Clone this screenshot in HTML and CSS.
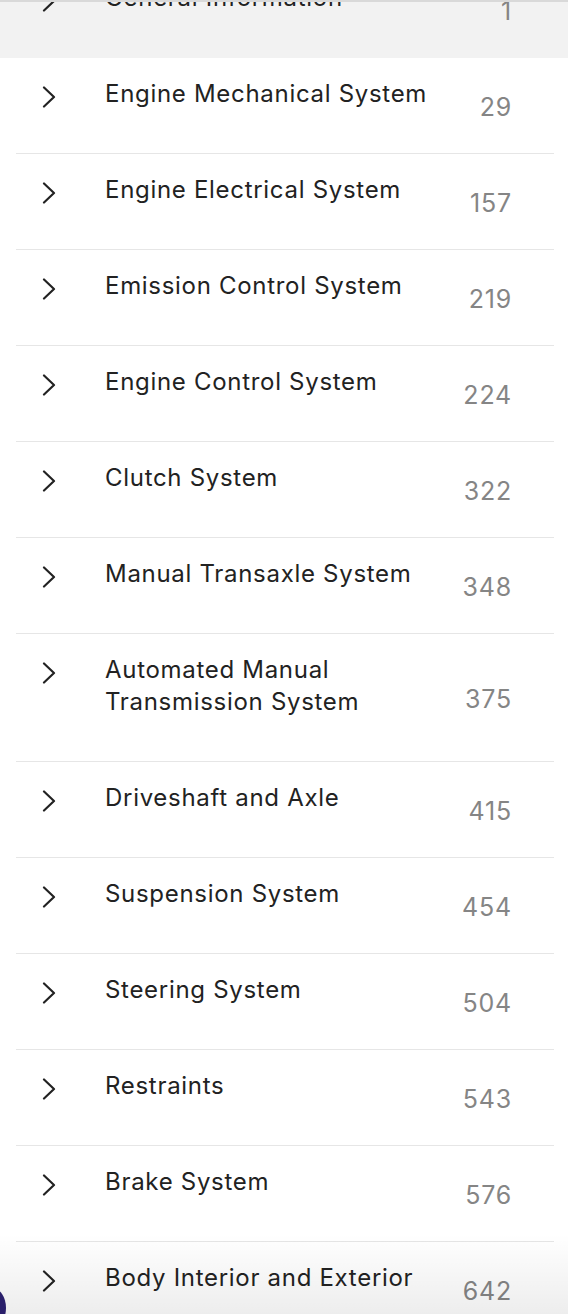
FILE: index.html
```html
<!DOCTYPE html>
<html lang="en">
<head>
<meta charset="utf-8">
<title>Contents</title>
<link rel="stylesheet" href="styles.css">
</head>
<body>
<div class="viewport">
  <ul class="toc">
    <li class="row row--active"><div class="row-inner">
      <svg class="chev" viewBox="0 0 14 22"><path d="M2 1.5 L12 11 L2 20.5"/></svg>
      <span class="title">General Information</span><span class="page">1</span></div></li>
    <li class="row"><div class="row-inner">
      <svg class="chev" viewBox="0 0 14 22"><path d="M2 1.5 L12 11 L2 20.5"/></svg>
      <span class="title">Engine Mechanical System</span><span class="page">29</span></div></li>
    <li class="row"><div class="row-inner">
      <svg class="chev" viewBox="0 0 14 22"><path d="M2 1.5 L12 11 L2 20.5"/></svg>
      <span class="title">Engine Electrical System</span><span class="page">157</span></div></li>
    <li class="row"><div class="row-inner">
      <svg class="chev" viewBox="0 0 14 22"><path d="M2 1.5 L12 11 L2 20.5"/></svg>
      <span class="title">Emission Control System</span><span class="page">219</span></div></li>
    <li class="row"><div class="row-inner">
      <svg class="chev" viewBox="0 0 14 22"><path d="M2 1.5 L12 11 L2 20.5"/></svg>
      <span class="title">Engine Control System</span><span class="page">224</span></div></li>
    <li class="row"><div class="row-inner">
      <svg class="chev" viewBox="0 0 14 22"><path d="M2 1.5 L12 11 L2 20.5"/></svg>
      <span class="title">Clutch System</span><span class="page">322</span></div></li>
    <li class="row"><div class="row-inner">
      <svg class="chev" viewBox="0 0 14 22"><path d="M2 1.5 L12 11 L2 20.5"/></svg>
      <span class="title">Manual Transaxle System</span><span class="page">348</span></div></li>
    <li class="row"><div class="row-inner">
      <svg class="chev" viewBox="0 0 14 22"><path d="M2 1.5 L12 11 L2 20.5"/></svg>
      <span class="title">Automated Manual<br>Transmission System</span><span class="page">375</span></div></li>
    <li class="row"><div class="row-inner">
      <svg class="chev" viewBox="0 0 14 22"><path d="M2 1.5 L12 11 L2 20.5"/></svg>
      <span class="title">Driveshaft and Axle</span><span class="page">415</span></div></li>
    <li class="row"><div class="row-inner">
      <svg class="chev" viewBox="0 0 14 22"><path d="M2 1.5 L12 11 L2 20.5"/></svg>
      <span class="title">Suspension System</span><span class="page">454</span></div></li>
    <li class="row"><div class="row-inner">
      <svg class="chev" viewBox="0 0 14 22"><path d="M2 1.5 L12 11 L2 20.5"/></svg>
      <span class="title">Steering System</span><span class="page">504</span></div></li>
    <li class="row"><div class="row-inner">
      <svg class="chev" viewBox="0 0 14 22"><path d="M2 1.5 L12 11 L2 20.5"/></svg>
      <span class="title">Restraints</span><span class="page">543</span></div></li>
    <li class="row"><div class="row-inner">
      <svg class="chev" viewBox="0 0 14 22"><path d="M2 1.5 L12 11 L2 20.5"/></svg>
      <span class="title">Brake System</span><span class="page">576</span></div></li>
    <li class="row"><div class="row-inner">
      <svg class="chev" viewBox="0 0 14 22"><path d="M2 1.5 L12 11 L2 20.5"/></svg>
      <span class="title">Body Interior and Exterior</span><span class="page">642</span></div></li>
  </ul>
  <div class="shade"></div>
  <div class="blob"></div>
</div>
</body>
</html>
```
FILE: styles.css
```css
* { box-sizing: border-box; }
html, body { margin: 0; padding: 0; background: #fff; }
body {
  font-family: Inter, "Open Sans", "Liberation Sans", sans-serif;
  -webkit-font-smoothing: antialiased;
}
.viewport {
  position: relative;
  width: 568px;
  height: 1314px;
  overflow: hidden;
  border-top: 2px solid #d9d9d9;
}
.toc {
  list-style: none;
  margin: -40px 0 0;
  padding: 0;
}
.row { background: #fff; }
.row--active { background: #f2f2f2; }
.row-inner {
  display: flex;
  margin: 0 14px 0 16px;
  border-bottom: 1px solid #e6e6e6;
}
.row--active .row-inner { border-bottom-color: #f2f2f2; }
.chev {
  flex: none;
  width: 14px;
  height: 22px;
  margin: 28px 0 0 26px;
  align-self: flex-start;
  fill: none;
  stroke: #222;
  stroke-width: 2.2;
  stroke-linecap: round;
  stroke-linejoin: round;
}
.title {
  flex: 1;
  padding: 20px 0 43px;
  margin-left: 49px;
  font-size: 24px;
  line-height: 32px;
  color: #222;
  letter-spacing: 0.7px;
}
.page {
  flex: none;
  align-self: center;
  margin: 2px 42px 0 16px;
  font-size: 25px;
  line-height: 32px;
  color: #858585;
  letter-spacing: 0.8px;
}
.shade {
  position: absolute;
  left: 0; right: 0; bottom: 0;
  height: 80px;
  background: linear-gradient(to bottom, rgba(0,0,0,0), rgba(0,0,0,0.07));
  pointer-events: none;
}
.blob {
  position: absolute;
  left: -22px;
  bottom: -14px;
  width: 28px;
  height: 40px;
  border-radius: 50%;
  background: #2a1f6b;
}
```
